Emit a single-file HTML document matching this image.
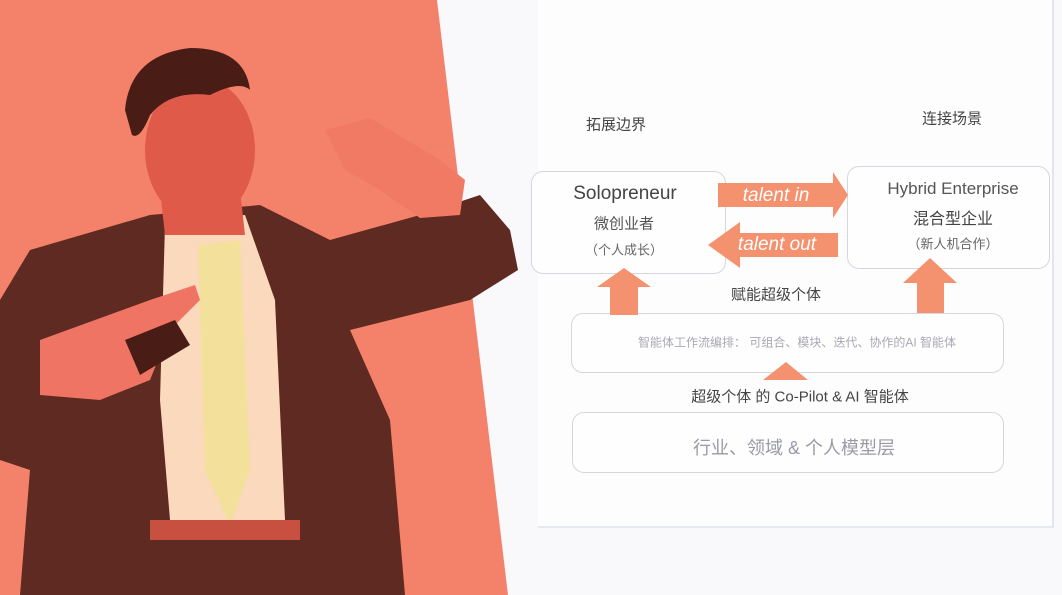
<!DOCTYPE html>
<html><head><meta charset="utf-8"><style>
html,body{margin:0;padding:0;width:1062px;height:595px;overflow:hidden;background:#f9f9fb;}
svg{position:absolute;left:0;top:0}
.t{position:absolute;font-family:"Liberation Sans","Noto Sans CJK SC",sans-serif;white-space:nowrap;transform:translate(-50%,-50%);color:#555}
.box{position:absolute;border:1.5px solid #d6d6de;border-radius:12px;background:#fefefe}
</style></head><body>
<div style="position:absolute;left:538px;top:0;width:514px;height:526px;border-right:2px solid #e2e4ef;border-bottom:2px solid #e6e8f2;background:#fdfdfe"></div>
<div class="box" style="left:531px;top:171px;width:193px;height:101px"></div>
<div class="box" style="left:847px;top:166px;width:201px;height:101px"></div>
<div class="box" style="left:571px;top:313px;width:431px;height:58px"></div>
<div class="box" style="left:572px;top:412px;width:430px;height:59px"></div>
<svg width="1062" height="595">
<g fill="#f4916f">
<polygon points="718,183 833,183 833,172 848,195 833,218 833,207 718,207"/>
<polygon points="838,233 740,233 740,222 708,245 740,268 740,257 838,257"/>
<polygon points="610,315 610,287 597,287 624,268 651,287 638,287 638,315"/>
<polygon points="917,313 917,283 903,283 930,258 957,283 944,283 944,313"/>
<polygon points="763,380 786,362 808,380"/>
</g>
<polygon points="0,0 437,0 508,595 0,595" fill="#f4826a"/>
<g>
<polygon points="30,250 150,215 260,205 330,240 420,215 480,195 510,230 518,270 470,300 350,330 390,420 405,595 20,595 30,470 0,460 0,300" fill="#5f2a21"/>
<polygon points="165,225 245,215 275,300 285,520 170,520 160,400" fill="#fbd9bc"/>
<polygon points="198,245 240,240 250,470 230,525 205,470" fill="#f3e09a"/>
<rect x="150" y="520" width="150" height="20" fill="#c85040"/>
<ellipse cx="200" cy="150" rx="55" ry="72" fill="#e05a4a"/>
<polygon points="160,190 240,190 245,235 165,235" fill="#e05a4a"/>
<path d="M125,110 Q130,55 190,48 Q245,48 250,90 Q240,80 210,95 Q170,90 150,115 Q140,140 132,135 Z" fill="#4a1c16"/>
<polygon points="325,130 370,118 440,160 465,180 460,215 420,218 380,190 345,170" fill="#f07a64"/>
<polygon points="40,340 150,300 195,285 200,300 170,330 150,380 100,400 40,395" fill="#f07464"/>
<polygon points="125,340 175,320 190,345 140,375" fill="#4a1c16"/>
</g>
</svg>
<div class="t" style="left:616px;top:124px;font-size:15px;color:#444">拓展边界</div>
<div class="t" style="left:952px;top:118px;font-size:15px;color:#444">连接场景</div>
<div class="t" style="left:625px;top:194px;font-size:19px;color:#444">Solopreneur</div>
<div class="t" style="left:624px;top:223px;font-size:15px;color:#555">微创业者</div>
<div class="t" style="left:624px;top:249px;font-size:13px;color:#666">（个人成长）</div>
<div class="t" style="left:953px;top:189px;font-size:17px;color:#555">Hybrid Enterprise</div>
<div class="t" style="left:953px;top:217px;font-size:16px;color:#444">混合型企业</div>
<div class="t" style="left:953px;top:243px;font-size:13px;color:#666">（新人机合作）</div>
<div class="t" style="left:776px;top:196px;font-size:19px;color:#fff;font-style:italic">talent in</div>
<div class="t" style="left:777px;top:245px;font-size:19px;color:#fff;font-style:italic">talent out</div>
<div class="t" style="left:776px;top:294px;font-size:15px;color:#444">赋能超级个体</div>
<div class="t" style="left:797px;top:342px;font-size:12px;color:#a8a8b4">智能体工作流编排：&nbsp;可组合、模块、迭代、协作的AI 智能体</div>
<div class="t" style="left:800px;top:396px;font-size:15px;color:#444">超级个体 的 Co-Pilot &amp; AI 智能体</div>
<div class="t" style="left:794px;top:447px;font-size:18px;color:#9a9aa6">行业、领域 &amp; 个人模型层</div>
</body></html>
